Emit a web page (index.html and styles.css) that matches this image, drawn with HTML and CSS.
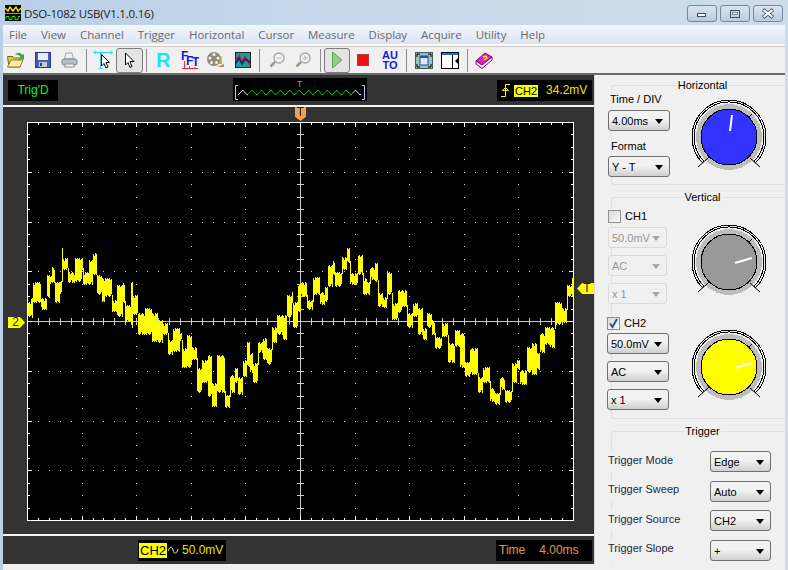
FILE: index.html
```html
<!DOCTYPE html>
<html lang="en">

<head>
    <meta charset="UTF-8">
    <title>DSO-1082 USB(V1.1.0.16)</title>
    <link rel="stylesheet" href="styles.css">
</head>

<body>
    <svg class="defs" width="0" height="0">
        <symbol id="knob" viewBox="0 0 80 80">
            <path d="M13.800 66.200A37 37 0 1 1 66.200 66.200" fill="none" stroke="#000" shape-rendering="crispEdges" />
            <path d="M15.300 64.700A35 35 0 1 1 64.700 64.700" fill="none" stroke="#000" shape-rendering="crispEdges" />
            <circle cx="40" cy="40" r="33" fill="#bdbdbd" shape-rendering="crispEdges" />
            <path d="M9 70L19 61M71 70L61 61M16 64L20 60M60 20L63 17" stroke="#000" fill="none" />
        </symbol>
    </svg>
    <div class="window">
        <div class="titlebar">
            <svg class="app-icon" width="16" height="16" viewBox="0 0 16 16">
                <rect width="16" height="16" fill="#000" />
                <path d="M0 3L3 6L5 2L8 6L11 2L13 6L16 3" fill="none" stroke="#ffe600" stroke-width="1.400" />
                <path d="M0 8.500H16" stroke="#00d8e8" />
                <path d="M1 14.500V11.500H4V14.500H7V11.500H10V14.500H13V11.500H15" fill="none" stroke="#22e022" />
            </svg>
            <span class="title-text">DSO-1082 USB(V1.1.0.16)</span>
            <div class="win-buttons">
                <div class="win-btn">
                    <svg width="12" height="8" viewBox="0 0 12 8"><rect x="1.500" y="3.500" width="8" height="3" fill="#fff" stroke="#3f4d60" /></svg>
                </div>
                <div class="win-btn">
                    <svg width="12" height="10" viewBox="0 0 12 10"><rect x="1.500" y="1.500" width="9" height="7" fill="none" stroke="#3f4d60" /><rect x="3.500" y="3.500" width="5" height="2" fill="#fff" stroke="#3f4d60" stroke-width=".6" /></svg>
                </div>
                <div class="win-btn">
                    <svg width="14" height="11" viewBox="0 0 14 11"><path d="M2 1.500L12 9.500M12 1.500L2 9.500" stroke="#45546a" stroke-width="3.600" /><path d="M2.500 2L11.500 9M11.500 2L2.500 9" stroke="#fff" stroke-width="2" /></svg>
                </div>
            </div>
        </div>

        <div class="menubar">
            <span>File</span><span>View</span><span>Channel</span><span>Trigger</span><span>Horizontal</span><span>Cursor</span><span>Measure</span><span>Display</span><span>Acquire</span><span>Utility</span><span>Help</span>
        </div>

        <div class="toolbar">
            <div class="tool">
                <svg width="20" height="18" viewBox="0 0 20 18">
                    <path d="M1.500 5.500H7L8.500 7H14V16H3Z" fill="#e8c850" stroke="#7a6a20" />
                    <path d="M1.500 16L5 9H17L14 16Z" fill="#fff0a0" stroke="#8a7a28" />
                    <path d="M9 4C11 1 15 1 16 4L18 3V8.500H12.500L14.500 6C13.500 4 11 3.500 9 4Z" fill="#3fa83f" />
                </svg>
            </div>
            <div class="tool">
                <svg width="16" height="16" viewBox="0 0 16 16">
                    <rect x=".5" y=".5" width="15" height="15" fill="#4a5fb8" stroke="#2a3680" />
                    <rect x="3" y="1" width="10" height="7" fill="#e8ecf4" />
                    <rect x="4" y="10" width="8" height="5" fill="#c4c8d8" />
                    <rect x="5" y="11" width="2" height="3" fill="#2a3680" />
                </svg>
            </div>
            <div class="tool">
                <svg width="17" height="16" viewBox="0 0 17 16">
                    <path d="M5 1H11L12.500 7H3.500Z" fill="#eef2f6" stroke="#9aa4b0" />
                    <rect x="1" y="7" width="15" height="6" rx="2" fill="#b8bec6" stroke="#7d858e" />
                    <rect x="4" y="12" width="9" height="3" fill="#f4f4f4" stroke="#8b9098" />
                </svg>
            </div>
            <div class="tool-sep"></div>
            <div class="tool">
                <svg width="21" height="20" viewBox="0 0 21 20">
                    <path d="M0 2.500H20M2 .5V4.500M18 .5V4.500M7.500 2V19M5.500 18.500H9.500" stroke="#28d8e8" fill="none" />
                    <path d="M8.500 4.500V16L11 13.500L13 18L15 17L13 12.500H16.500Z" fill="#fff" stroke="#000" />
                </svg>
            </div>
            <div class="tool tool-on">
                <svg width="12" height="17" viewBox="0 0 12 17">
                    <path d="M1.500 1V13L4 10.500L6 15.500L8 14.500L6 9.500H10Z" fill="#fff" stroke="#000" />
                </svg>
            </div>
            <div class="tool-sep"></div>
            <div class="tool"><span class="tool-r">R</span></div>
            <div class="tool">
                <svg width="18" height="19" viewBox="0 0 18 19">
                    <text x="0" y="9" class="fft-letter" fill="#1020e0">F</text>
                    <text x="5" y="14" class="fft-letter" fill="#1020e0">F</text>
                    <text x="11" y="15" class="fft-letter" fill="#1020e0">T</text>
                    <path d="M1 17.500H17M3.500 10V18M8.500 15V18M14 16V18" stroke="#f03030" fill="none" />
                </svg>
            </div>
            <div class="tool">
                <svg width="18" height="18" viewBox="0 0 18 18">
                    <circle cx="7" cy="8" r="7" fill="#8b8b80" />
                    <circle cx="7" cy="3.500" r="1.500" fill="#f4f4f4" />
                    <circle cx="3" cy="7" r="1.500" fill="#f4f4f4" />
                    <circle cx="11" cy="7" r="1.500" fill="#f4f4f4" />
                    <circle cx="4.500" cy="11.500" r="1.500" fill="#f4f4f4" />
                    <circle cx="9.500" cy="11.500" r="1.500" fill="#f4f4f4" />
                    <path d="M13 5L14.500 5L15 13H12Z" fill="#b8b040" />
                    <path d="M10 16L17 13L17 16Z" fill="#c08a50" />
                </svg>
            </div>
            <div class="tool">
                <svg width="16" height="16" viewBox="0 0 16 16">
                    <rect x=".5" y=".5" width="15" height="15" fill="#18a0a0" stroke="#202020" />
                    <path d="M1 9L4 4L7 10L10 5L15 13" fill="none" stroke="#c82040" stroke-width="2" />
                    <path d="M1 11L4 6L7 12L10 7L15 10" fill="none" stroke="#182060" stroke-width="1.500" />
                </svg>
            </div>
            <div class="tool-sep"></div>
            <div class="tool">
                <svg width="16" height="16" viewBox="0 0 16 16">
                    <circle cx="10" cy="6" r="5" fill="#f4f4f4" stroke="#a8a8a8" stroke-width="1.400" />
                    <path d="M7.500 6H12.500" stroke="#b0b0b0" />
                    <path d="M6 10L1.500 14.500" stroke="#a89878" stroke-width="2.500" />
                </svg>
            </div>
            <div class="tool">
                <svg width="16" height="16" viewBox="0 0 16 16">
                    <circle cx="10" cy="6" r="5" fill="#f4f4f4" stroke="#a8a8a8" stroke-width="1.400" />
                    <path d="M7.500 6H12.500M10 3.500V8.500" stroke="#b0b0b0" />
                    <path d="M6 10L1.500 14.500" stroke="#a89878" stroke-width="2.500" />
                </svg>
            </div>
            <div class="tool-sep"></div>
            <div class="tool tool-on">
                <svg width="12" height="18" viewBox="0 0 12 18">
                    <path d="M1.500 1L11 9L1.500 17Z" fill="#8fd080" stroke="#5aa850" />
                </svg>
            </div>
            <div class="tool">
                <svg width="12" height="12" viewBox="0 0 12 12">
                    <rect x=".5" y=".5" width="11" height="11" fill="#f01010" stroke="#b04040" />
                </svg>
            </div>
            <div class="tool"><span class="tool-auto">AU<br>TO</span></div>
            <div class="tool-sep"></div>
            <div class="tool">
                <svg width="18" height="17" viewBox="0 0 18 17">
                    <rect x=".5" y=".5" width="17" height="16" fill="#9cc0b0" stroke="#3f5f58" />
                    <rect x="5" y="4" width="8" height="9" fill="#dce8f8" stroke="#2050c0" />
                    <rect x="5" y="4" width="8" height="2" fill="#2050c0" />
                    <path d="M2 5V2H5M13 2H16V5M2 12V15H5M13 15H16V12" fill="none" stroke="#000" />
                </svg>
            </div>
            <div class="tool">
                <svg width="18" height="17" viewBox="0 0 18 17">
                    <rect x=".5" y=".5" width="17" height="16" fill="#fff" stroke="#000" />
                    <rect x="1" y="1" width="16" height="2" fill="#1870d8" />
                    <path d="M11.500 3V16" stroke="#000" />
                    <path d="M17 6L14 9L17 12Z" fill="#000" />
                </svg>
            </div>
            <div class="tool-sep"></div>
            <div class="tool">
                <svg width="18" height="17" viewBox="0 0 18 17">
                    <path d="M1 9L10 1L17 5L7 13Z" fill="#e020c0" stroke="#701070" />
                    <path d="M1 9V12L7 16.500L17 8V5L7 13Z" fill="#f0e8f0" stroke="#701070" />
                    <path d="M8 5L11 4L12 6L9 8" fill="none" stroke="#f4e820" stroke-width="1.400" />
                </svg>
            </div>
        </div>

        <div class="main">
            <div class="scope-side">
                <div class="status-bar">
                    <div class="lcd lcd-trig">Trig'D</div>
                    <div class="lcd lcd-window">
                        <span class="mini-t">T</span>
                        <canvas id="miniWave" width="134" height="23"></canvas>
                    </div>
                    <div class="lcd lcd-trigger">
                        <svg width="9" height="15" viewBox="0 0 9 15">
                            <path d="M0 13.500H4.500V1.500H9M1.500 7.500L4.500 4.500L7.500 7.500Z" fill="none" stroke="#ffff00" />
                        </svg>
                        <span class="chip">CH2</span>
                        <span>34.2mV</span>
                    </div>
                </div>
                <div class="scope-panel">
                    <canvas id="scope" width="547" height="399"></canvas>
                    <span class="marker marker-top">T</span>
                    <span class="marker marker-left">2</span>
                    <span class="marker marker-right">T</span>
                </div>
                <div class="bottom-bar">
                    <div class="lcd lcd-channel">
                        <span class="chip chip-large">CH2</span>
                        <svg width="11" height="9" viewBox="0 0 11 9"><path d="M0 5C2 0 4 0 5 4C6 8 8 9 10 3" fill="none" stroke="#f0f0c0" /></svg>
                        <span>50.0mV</span>
                    </div>
                    <div class="lcd lcd-time">
                        <span>Time</span>
                        <span>4.00ms</span>
                    </div>
                </div>
            </div>

            <div class="controls">
                <div class="group group-horizontal">
                    <div class="group-title"><span>Horizontal</span></div>
                    <div class="control-row">
                        <div class="control-col">
                            <div class="label">Time / DIV</div>
                            <div class="combo combo-first">4.00ms</div>
                            <div class="label label-format">Format</div>
                            <div class="combo combo-format">Y - T</div>
                        </div>
                        <svg class="knob" width="80" height="80" viewBox="0 0 80 80">
                            <use href="#knob" />
                            <circle cx="40" cy="40" r="28" fill="#3333ff" stroke="#000" shape-rendering="crispEdges" />
                            <path d="M41 34L43 18" stroke="#fff" stroke-width="2" />
                        </svg>
                    </div>
                </div>

                <div class="group group-vertical">
                    <div class="group-title"><span>Vertical</span></div>
                    <div class="control-row channel-one">
                        <div class="control-col">
                            <div class="check-row">
                                <span class="check"></span>
                                <span>CH1</span>
                            </div>
                            <div class="combo combo-off combo-first">50.0mV</div>
                            <div class="combo combo-off">AC</div>
                            <div class="combo combo-off">x 1</div>
                        </div>
                        <svg class="knob" width="80" height="80" viewBox="0 0 80 80">
                            <use href="#knob" />
                            <circle cx="40" cy="40" r="28" fill="#999999" stroke="#000" shape-rendering="crispEdges" />
                            <path d="M46 41L63 36" stroke="#fff" stroke-width="2" />
                        </svg>
                    </div>
                    <div class="control-row channel-two">
                        <div class="control-col">
                            <div class="check-row">
                                <span class="check check-on">
                                    <svg width="11" height="11" viewBox="0 0 11 11"><path d="M2 5.500L4.500 9L9 1" fill="none" stroke="#34508c" stroke-width="2" /></svg>
                                </span>
                                <span>CH2</span>
                            </div>
                            <div class="combo combo-first">50.0mV</div>
                            <div class="combo">AC</div>
                            <div class="combo">x 1</div>
                        </div>
                        <svg class="knob" width="80" height="80" viewBox="0 0 80 80">
                            <use href="#knob" />
                            <circle cx="40" cy="40" r="28" fill="#ffff00" stroke="#000" shape-rendering="crispEdges" />
                            <path d="M46 41L63 36" stroke="#fff" stroke-width="2" />
                        </svg>
                    </div>
                </div>

                <div class="group group-trigger">
                    <div class="group-title"><span>Trigger</span></div>
                    <div class="trigger-row">
                        <span class="trigger-label">Trigger Mode</span>
                        <div class="combo">Edge</div>
                    </div>
                    <div class="trigger-row">
                        <span class="trigger-label">Trigger Sweep</span>
                        <div class="combo">Auto</div>
                    </div>
                    <div class="trigger-row">
                        <span class="trigger-label">Trigger Source</span>
                        <div class="combo">CH2</div>
                    </div>
                    <div class="trigger-row">
                        <span class="trigger-label">Trigger Slope</span>
                        <div class="combo">+</div>
                    </div>
                </div>
            </div>
        </div>
    </div>
    <script src="script.js"></script>
</body>

</html>
```

FILE: styles.css
```css
html,
body {
    margin: 0;
    padding: 0;
}

body {
    width: 788px;
    height: 570px;
    overflow: hidden;
    font-family: "Liberation Sans", Arial, sans-serif;
    font-size: 11px;
    color: #000;
}

.defs {
    position: absolute;
}

.window {
    width: 788px;
    height: 570px;
    box-sizing: border-box;
    padding: 0 3px;
    background: linear-gradient(to right, #b9cfe6, #c6d8ea 40%, #cfdde9);
    display: flex;
    flex-direction: column;
}

.titlebar {
    height: 25px;
    display: flex;
    align-items: flex-start;
    margin: 0 -3px;
    padding: 0 5px;
}

.app-icon {
    margin-top: 5px;
}

.title-text {
    margin: 5px 0 0 3px;
    font-family: "Open Sans", sans-serif;
    font-size: 11.5px;
    letter-spacing: -0.2px;
    line-height: 17px;
    color: #222;
}

.win-buttons {
    margin: 5px 0 0 auto;
    display: flex;
    gap: 3px;
}

.win-btn {
    width: 28px;
    height: 15px;
    border: 1px solid #76879c;
    border-radius: 3px;
    background: linear-gradient(to bottom, #d9e4ef, #bccbdc);
    display: flex;
    align-items: center;
    justify-content: center;
}

.menubar {
    height: 19px;
    display: flex;
    gap: 14px;
    padding-left: 6px;
    background: linear-gradient(to bottom, #f4f7fc, #dbe4f2);
    font-family: "Open Sans", sans-serif;
    font-size: 11.5px;
    letter-spacing: -0.05px;
    line-height: 19px;
    color: #6a6a6a;
    border-bottom: 2px solid #fbfbfb;
}

.toolbar {
    height: 27px;
    display: flex;
    align-items: center;
    background: #f0f0f0;
    border-top: 1px solid #c8c8c8;
    box-sizing: border-box;
}

.tool {
    width: 26.6px;
    height: 25px;
    box-sizing: border-box;
    display: flex;
    align-items: center;
    justify-content: center;
}

.tool-on {
    border: 1px solid #7d7d7d;
    border-radius: 3px;
    background: #e4e4e4;
}

.tool-sep {
    width: 7px;
    height: 23px;
    position: relative;
}

.tool-sep::after {
    content: "";
    display: block;
    width: 1px;
    height: 23px;
    margin-left: 3px;
    background: #8d8d8d;
}

.tool-r {
    font-size: 20px;
    font-weight: bold;
    color: #10e8f8;
}

.fft-letter {
    font-size: 12px;
    font-weight: bold;
}

.tool-auto {
    font-size: 11px;
    line-height: 10px;
    font-weight: bold;
    color: #1020d8;
    text-align: center;
}

.main {
    flex: 1;
    display: flex;
    min-height: 0;
    background: #f0f0f0;
    border-top: 2px solid #6a6a6a;
}

.scope-side {
    width: 592px;
    display: flex;
    flex-direction: column;
    border-right: 1px solid #d8d8d8;
    box-sizing: border-box;
    margin-bottom: 5px;
}

.status-bar,
.bottom-bar {
    background: #333333;
    display: flex;
    padding: 0 2px 0 5px;
    box-sizing: border-box;
    align-items: flex-start;
}

.status-bar {
    height: 30px;
    padding-top: 5px;
}

.bottom-bar {
    height: 28px;
    padding-top: 4px;
}

.lcd {
    height: 21px;
    background: #000;
    line-height: 21px;
    font-size: 12px;
    color: #e6e600;
    display: flex;
    align-items: center;
}

.lcd-trig {
    width: 50px;
    justify-content: center;
    color: #00ff00;
}

.lcd-window {
    width: 134px;
    height: 23px;
    margin: -2px 0 0 175px;
    position: relative;
}

.mini-t {
    position: absolute;
    left: 64px;
    top: 0;
    font-size: 9px;
    line-height: 12px;
    color: #e08a40;
}

.lcd-trigger {
    width: 95px;
    margin-left: auto;
    padding-left: 4px;
    box-sizing: border-box;
}

.chip {
    background: #ffff00;
    color: #000;
    font-size: 11px;
    line-height: 12px;
    padding: 0 1px;
    margin: 0 8px 0 4px;
}

.scope-panel {
    height: 431px;
    box-sizing: border-box;
    padding: 15px 0 0 24px;
    background: #333333;
    border-top: 2px solid #f4f4f4;
    border-bottom: 2px solid #f4f4f4;
    position: relative;
}

#scope {
    display: block;
}

.marker {
    position: absolute;
    color: #222;
    font-size: 12px;
    line-height: 11px;
    text-align: center;
}

.marker-top {
    left: 292px;
    top: 0;
    width: 11px;
    height: 14px;
    background: #f0a050;
    clip-path: polygon(0 0, 100% 0, 100% 70%, 50% 100%, 0 70%);
}

.marker-left {
    left: 5px;
    top: 210px;
    width: 17px;
    height: 11px;
    background: #ffff00;
    clip-path: polygon(0 0, 70% 0, 100% 50%, 70% 100%, 0 100%);
    text-indent: -2px;
}

.marker-right {
    left: 574px;
    top: 176px;
    width: 17px;
    height: 11px;
    background: #ffff00;
    clip-path: polygon(30% 0, 100% 0, 100% 100%, 30% 100%, 0 50%);
    text-indent: 3px;
}

.lcd-channel {
    width: 88px;
    margin-left: 130px;
}

.chip-large {
    font-size: 13px;
    line-height: 15px;
    margin: 0 0 0 1px;
}

.lcd-channel svg {
    margin: 0 3px 0 1px;
}

.lcd-time {
    width: 96px;
    margin-left: auto;
    padding-left: 3px;
    box-sizing: border-box;
    color: #e09848;
    gap: 14px;
}

.controls {
    flex: 1;
    padding-left: 16px;
    min-width: 0;
}

.group {
    border: 1px solid #d9e2e6;
    border-right: none;
    border-radius: 4px 0 0 4px;
}

.group-horizontal {
    margin-top: 10px;
    height: 100px;
    box-sizing: border-box;
}

.group-vertical {
    margin-top: 12px;
    height: 222px;
    box-sizing: border-box;
}

.group-trigger {
    margin-top: 12px;
    height: 133px;
    box-sizing: border-box;
    border-bottom: none;
}

.group-title {
    height: 14px;
    margin-top: -8px;
    line-height: 14px;
    text-align: center;
    padding-left: 8px;
}

.group-title span {
    background: #f0f0f0;
    padding: 0 1px;
}

.control-row {
    display: flex;
    margin-left: -4px;
}

.control-col {
    width: 62px;
    flex: none;
}

.label {
    height: 14px;
    line-height: 14px;
    padding-left: 2px;
    background: #f0f0f0;
}

.label-format {
    margin-top: 8px;
    padding-left: 3px;
}

.knob {
    flex: none;
    margin: 5px 0 0 19px;
}

.combo {
    position: relative;
    height: 21px;
    box-sizing: border-box;
    margin-top: 7px;
    padding-left: 3px;
    border: 1px solid #707070;
    border-radius: 3px;
    background: linear-gradient(to bottom, #f2f2f2 45%, #cfcfcf);
    line-height: 20px;
}

.combo::after {
    content: "";
    position: absolute;
    right: 6px;
    top: 8px;
    border-left: 4.500px solid transparent;
    border-right: 4.500px solid transparent;
    border-top: 5px solid #000;
}

.combo-first {
    margin-top: 4px;
}

.combo-format {
    margin-top: 3px;
}

.combo-off {
    margin-right: 3px;
    border-color: #d9d9d9;
    background: #f0f0f0;
    color: #969696;
}

.combo-off::after {
    border-top-color: #a8a8a8;
}

.check-row {
    height: 14px;
    display: flex;
    align-items: center;
    gap: 4px;
    background: #f0f0f0;
}

.check {
    width: 11px;
    height: 11px;
    border: 1px solid #8e8f8f;
    background: linear-gradient(135deg, #d8d8d8, #fbfbfb);
    display: block;
}

.check-on svg {
    display: block;
}

.channel-one {
    margin-top: 5px;
}

.channel-one .knob {
    margin-top: 13px;
}

.channel-two {
    margin-top: 12px;
    margin-left: -5px;
}

.channel-two .combo-first {
    margin-top: 3px;
}

.channel-two .knob {
    margin: 11px 0 0 20px;
}

.group-trigger .group-title {
    margin-bottom: 13px;
}

.trigger-row {
    display: flex;
    align-items: center;
    justify-content: space-between;
    width: 163px;
    margin: 0 0 8.600px -4px;
    background: #f0f0f0;
}

.trigger-label {
    position: relative;
    top: -2px;
    color: #1c2a3a;
}

.trigger-row .combo {
    width: 61px;
    margin-top: 0;
}
```

FILE: script.js
```javascript
// trace samples read off the capture: [x, top, bottom] in 3x pixels
const traceLeft = [[84, 245, 290], [92, 235, 295], [100, 185, 250], [122, 235, 270], [140, 165, 235], [150, 165, 195], [155, 140, 190], [165, 185, 250], [180, 180, 225], [187, 85, 175], [190, 115, 150], [205, 155, 190], [225, 115, 185], [245, 115, 150], [250, 155, 195], [268, 120, 195], [280, 100, 165], [290, 165, 225], [305, 175, 245], [315, 175, 230], [335, 240, 275], [350, 195, 290], [370, 185, 250], [375, 255, 305], [393, 185, 325], [398, 225, 285], [415, 280, 345], [435, 265, 345], [455, 280, 365], [475, 300, 370], [490, 310, 345], [505, 360, 405], [520, 325, 395], [540, 335, 365], [545, 385, 445], [560, 345, 445], [575, 380, 420], [590, 445, 520], [605, 420, 490], [625, 405, 530], [635, 490, 560], [650, 405, 520], [675, 525, 563], [690, 465, 520], [705, 445, 490], [715, 470, 525], [730, 420, 470], [742, 365, 440], [750, 400, 460], [760, 430, 490], [775, 365, 400], [790, 355, 420], [800, 385, 435], [815, 320, 370], [830, 285, 345], [850, 285, 360], [860, 225, 295], [875, 215, 250], [880, 245, 325], [895, 195, 275]];
const traceRight = [[0, 185, 230], [20, 240, 270], [40, 170, 225], [60, 215, 255], [75, 200, 245], [85, 135, 200], [100, 120, 165], [105, 155, 200], [125, 110, 150], [142, 85, 130], [150, 160, 195], [175, 105, 165], [190, 175, 225], [200, 185, 225], [210, 140, 180], [225, 130, 185], [235, 220, 260], [250, 230, 265], [260, 155, 225], [275, 250, 300], [295, 210, 280], [305, 210, 260], [320, 280, 325], [340, 250, 290], [355, 265, 345], [370, 325, 360], [380, 280, 325], [395, 300, 345], [405, 350, 388], [425, 310, 350], [445, 370, 430], [465, 330, 380], [480, 340, 445], [495, 425, 470], [510, 385, 465], [535, 470, 520], [550, 440, 490], [570, 505, 545], [585, 520, 555], [600, 470, 510], [615, 510, 548], [635, 430, 490], [650, 420, 450], [660, 450, 495], [680, 380, 460], [695, 370, 465], [710, 400, 450], [720, 340, 400], [735, 320, 375], [750, 320, 385], [765, 245, 315], [785, 265, 310], [800, 195, 230], [815, 175, 230]];

const stepX = 54.6 / 5; // minor division across
const stepY = 49.75 / 4; // minor division down
const jitter = [0, 1, 0, 2, 1, 0, 1, 3, 0, 1]; // rough edge of the trace

function drawGraticule(ctx, w, h) {
    const midX = 273;
    const midY = 199;

    ctx.fillStyle = '#000';
    ctx.fillRect(0, 0, w, h);

    ctx.fillStyle = '#fff';
    ctx.fillRect(0, 0, w, 1);
    ctx.fillRect(0, h - 1, w, 1);
    ctx.fillRect(0, 0, 1, h);
    ctx.fillRect(w - 1, 0, 1, h);

    ctx.fillStyle = '#c8c8c8';
    ctx.fillRect(0, midY, w, 1);
    ctx.fillRect(midX, 0, 1, h);

    // ticks on the border and on the two centre lines
    for (let i = 1; i < 50; i++) {
        const x = Math.round(i * stepX);
        const len = i % 5 === 0 ? 5 : 3;
        ctx.fillStyle = '#fff';
        ctx.fillRect(x, 0, 1, len);
        ctx.fillRect(x, h - len, 1, len);
        ctx.fillStyle = '#c8c8c8';
        ctx.fillRect(x, midY - 3, 1, 7);
    }
    for (let j = 1; j < 32; j++) {
        const y = Math.round(j * stepY);
        const len = j % 4 === 0 ? 5 : 3;
        ctx.fillStyle = '#fff';
        ctx.fillRect(0, y, len, 1);
        ctx.fillRect(w - len, y, len, 1);
        ctx.fillStyle = '#c8c8c8';
        ctx.fillRect(midX - 3, y, 7, 1);
    }

    // dotted grid
    ctx.fillStyle = '#d0d0d0';
    for (let r = 1; r < 8; r++) {
        const y = Math.round(r * 49.75);
        for (let i = 1; i < 50; i++) {
            ctx.fillRect(Math.round(i * stepX), y, 1, 1);
        }
    }
    for (let c = 1; c < 10; c++) {
        const x = Math.round(c * 54.6);
        for (let j = 1; j < 32; j++) {
            ctx.fillRect(x, Math.round(j * stepY), 1, 1);
        }
    }
}

function drawTrace(ctx, samples, originX) {
    ctx.fillStyle = '#ffff00';
    for (let i = 0; i < samples.length; i++) {
        const s = samples[i];
        const n = samples[i + 1];
        const x = Math.round(originX + s[0] / 3) - 27;
        const x2 = n ? Math.round(originX + n[0] / 3) - 27 : x + 3;
        const top = Math.round(220 + s[1] / 3) - 122;
        const bottom = Math.round(220 + s[2] / 3) - 122;

        for (let col = x; col < Math.max(x2, x + 1); col++) {
            const a = jitter[col % 10];
            const b = jitter[(col + 3) % 10];
            ctx.fillRect(col, top + a, 1, bottom - top - a - b);
        }

        // the beam is one line: join this run to the next one
        if (n) {
            const nextTop = Math.round(220 + n[1] / 3) - 122;
            const nextBottom = Math.round(220 + n[2] / 3) - 122;
            const from = Math.min(bottom, nextBottom);
            const to = Math.max(top, nextTop);
            if (to > from) {
                ctx.fillRect(x2, from - 2, 1, to - from + 4);
            }
        }
    }
}

function drawMiniWave() {
    const canvas = document.getElementById('miniWave');
    const ctx = canvas.getContext('2d');
    const w = canvas.width;

    ctx.strokeStyle = '#b8c8f0';
    ctx.beginPath();
    ctx.moveTo(5, 7.5);
    ctx.lineTo(2.5, 7.5);
    ctx.lineTo(2.5, 21.5);
    ctx.lineTo(5, 21.5);
    ctx.moveTo(w - 5, 7.5);
    ctx.lineTo(w - 2.5, 7.5);
    ctx.lineTo(w - 2.5, 21.5);
    ctx.lineTo(w - 5, 21.5);
    ctx.stroke();

    // white where the record is off screen, green for what is shown
    let last = null;
    for (let x = 5; x < w - 5; x++) {
        const phase = (x - 5) % 9.4;
        const y = 12 + Math.abs(phase - 4.7) * 1.1;
        if (last) {
            ctx.strokeStyle = x < 16 || x > 120 ? '#ffffff' : '#00e000';
            ctx.beginPath();
            ctx.moveTo(last[0], last[1]);
            ctx.lineTo(x, y);
            ctx.stroke();
        }
        last = [x, y];
    }
}

function drawScope() {
    const canvas = document.getElementById('scope');
    const ctx = canvas.getContext('2d');
    drawGraticule(ctx, canvas.width, canvas.height);
    drawTrace(ctx, traceLeft, 0);
    drawTrace(ctx, traceRight, 300);
}

drawScope();
drawMiniWave();
```
